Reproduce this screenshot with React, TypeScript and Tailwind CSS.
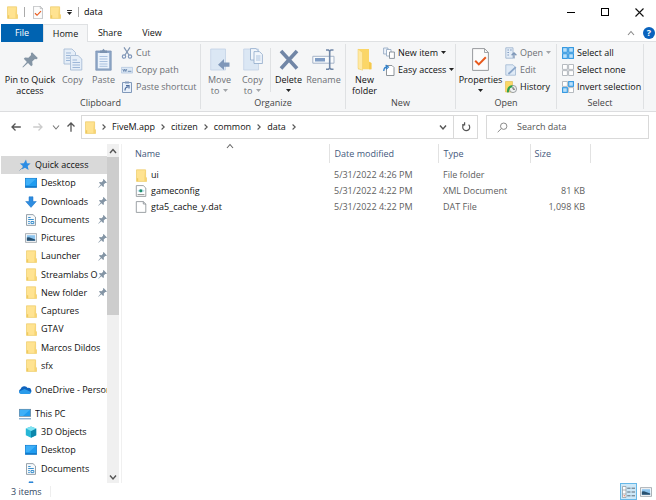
import type { ReactNode } from "react";

type P = { className?: string };

const FolderIcon = ({ className = "h-[13px] w-[11px]" }: P) => (
  <svg viewBox="0 0 11 13" className={className} aria-hidden="true">
    <path d="M.5.8H9.6V8L10.6 9V12.4H.5Z" fill="#ffe391" stroke="#edcb68" strokeWidth=".7" />
    <path d="M.8 9.2H2.2V12.2H.8Z" fill="#f0ca60" />
    <path d="M9 1.2H9.6V8L10.5 9V12.2H8.4V8Z" fill="#f7d474" />
  </svg>
);

const PinIcon = ({ className = "h-[9px] w-[9px]" }: P) => (
  <svg viewBox="0 0 16 16" className={className} aria-hidden="true">
    <path d="M10 .2 15.8 6 14.6 7.2 12.9 6.9 10.2 9.6 10.6 13 9.2 14.2 6 11 1 15.5.4 15 4.9 9.9 1.8 6.8 3 5.4 6.4 5.8 9.1 3.1 8.8 1.4Z" fill="#8495a5" />
  </svg>
);

const CheckDoc = ({ className }: P) => (
  <svg viewBox="0 0 17 23" className={className} aria-hidden="true">
    <path d="M.6.6H12.5L16.4 4.5V22.4H.6Z" fill="#fcfcfc" stroke="#8c9094" strokeWidth=".9" />
    <path d="M12.5.6V4.5H16.4" fill="none" stroke="#8c9094" strokeWidth=".8" />
    <path d="M3.2 12.8 6.8 16.4 13.8 9.2" fill="none" stroke="#e8591c" strokeWidth="2" />
  </svg>
);

const CopyIcon = () => (
  <svg viewBox="0 0 20 23" className="h-[23px] w-5" aria-hidden="true">
    <g fill="#e5eef8" stroke="#a9bdd6" strokeWidth=".9">
      <path d="M1 1H9L12.5 4.5V16H1Z" />
      <path d="M7.5 7.5H15L18.8 11V22H7.5Z" />
    </g>
    <path d="M3 5H8M3 7.5H7M3 10H7M3 12.5H7M9.5 12H14M9.5 14.5H17M9.5 17H17M9.5 19.5H17" stroke="#9db7d8" />
  </svg>
);

const PasteIcon = () => (
  <svg viewBox="0 0 17 23" className="h-[23px] w-[17px]" aria-hidden="true">
    <path d="M.8 3H16.2V22.2H.8Z" fill="#8da6c6" stroke="#7d96b7" strokeWidth=".8" />
    <path d="M2.8 5H14.2V20.4H2.8Z" fill="#eaf2fb" />
    <path d="M5 2.5H7L8.5.8 10 2.5H12V5H5Z" fill="#7c93b0" />
    <path d="M4.5 8.5H12.5M4.5 11H12.5M4.5 13.5H12.5M4.5 16H12.5M4.5 18.3H12.5" stroke="#a9c1df" />
  </svg>
);

const MoveIcon = () => (
  <svg viewBox="0 0 20 23" className="h-[23px] w-5" aria-hidden="true">
    <path d="M.7 1H15.5V22H.7Z" fill="#dbe7f4" stroke="#c1d2e6" strokeWidth=".8" />
    <path d="M19.5 14.5H14V11L8 16.7 14 22V18.8H19.5Z" fill="#7f97b9" />
  </svg>
);

const CopyToIcon = () => (
  <svg viewBox="0 0 20 23" className="h-[23px] w-5" aria-hidden="true">
    <path d="M.7 1H15.5V22H.7Z" fill="#dbe7f4" stroke="#c1d2e6" strokeWidth=".8" />
    <g fill="#f1f6fc" stroke="#8fa9c9" strokeWidth=".8">
      <path d="M7.5.6H13L15.5 3V12H7.5Z" />
      <path d="M11 3.6H16.5L19.4 6.5V15.5H11Z" />
    </g>
    <path d="M13 8H17.5M13 10H17.5M13 12H17.5" stroke="#9db7d8" strokeWidth=".8" />
  </svg>
);

const DeleteIcon = () => (
  <svg viewBox="0 0 20 23" className="h-[23px] w-5" aria-hidden="true">
    <path d="M2 3 18 20.5M18 3 2 20.5" stroke="#7186a6" strokeWidth="3.6" />
  </svg>
);

const RenameIcon = () => (
  <svg viewBox="0 0 23 23" className="h-[23px] w-[23px]" aria-hidden="true">
    <path d="M.8 8.3H22V15.2H.8Z" fill="#f8fafc" stroke="#a5b4c8" />
    <path d="M3 10H13V13.5H3Z" fill="#7f9cc4" />
    <path d="M14 2H16.5L17.7 3.2 19 2H21.5M17.7 3V20M14 21.2H16.5L17.7 20 19 21.2H21.5" fill="none" stroke="#7087a8" strokeWidth="1.6" />
  </svg>
);

const BigFolder = () => (
  <svg viewBox="0 0 15 23" className="h-[23px] w-[15px]" aria-hidden="true">
    <path d="M1 1H12V13.5L14.4 15V21.3H1Z" fill="#fbd667" />
    <path d="M1 1 5.5 4.5V22.3L1 20.5Z" fill="#ffe9a3" stroke="#efcb62" strokeWidth=".5" />
    <path d="M12 1V14L14.4 15V21.3H12Z" fill="#f4c84e" />
  </svg>
);

const S = ({ children }: { children: ReactNode }) => (
  <svg viewBox="0 0 12 12" className="h-3 w-3 shrink-0" fill="none" aria-hidden="true">
    {children}
  </svg>
);

const CutIcon = () => (
  <S>
    <path d="M3 .3 8 8M9 .3 4 8" stroke="#8196b3" strokeWidth="1.2" />
    <circle cx="3" cy="9.6" r="1.7" stroke="#7c94b8" strokeWidth="1.1" />
    <circle cx="9" cy="9.6" r="1.7" stroke="#7c94b8" strokeWidth="1.1" />
  </S>
);
const PathIcon = () => (
  <S>
    <path d="M.4 3.4H11.6V9H.4Z" fill="#dce8f5" stroke="#b3c6de" strokeWidth=".8" />
    <path d="M1.8 5 2.8 7.5 3.8 5 4.8 7.5 5.8 5M6.8 7.3H10.4" stroke="#6884ab" strokeWidth=".9" />
  </S>
);
const ShortcutIcon = () => (
  <S>
    <path d="M1.5 1.5H10.5V11.5H1.5Z" fill="#e8f0fa" stroke="#8199ba" />
    <path d="M4 .5H8V2.5H4Z" fill="#8199ba" />
    <path d="M4 9.5C4 7 5 6 7 6M5 4.6H8V7.6" stroke="#4d6d9d" strokeWidth="1.2" />
  </S>
);
const NewItemIcon = () => (
  <S>
    <path d="M.6 1H5V7H.6Z" fill="#eef4fb" stroke="#8ea4bf" strokeWidth=".8" />
    <path d="M3.5 2.5H8V9H3.5Z" fill="#fff" stroke="#8ea4bf" strokeWidth=".8" />
    <path d="M6.5 5H11.4V11.4H6.5Z" fill="#fff" stroke="#737d88" strokeWidth=".8" />
  </S>
);
const EasyIcon = () => (
  <S>
    <path d="M3.5 1.5H9L11 3.5V11.5H3.5Z" fill="#fff" stroke="#82898f" strokeWidth=".9" />
    <path d="M.8 7C.8 4 2 3 4 3M2.6.9 5.4 3 3 5.3" stroke="#2f7fc9" strokeWidth="1.3" />
  </S>
);
const OpenIcon = () => (
  <S>
    <path d="M.8.8H8V11.2H.8Z" fill="#e4edf7" stroke="#a3b7d0" strokeWidth=".9" />
    <path d="M2.5 3H3.8M2.5 5.5H3.8M2.5 8H3.8M5.2 3H6.6" stroke="#6f8db7" strokeWidth="1.2" />
    <path d="M9 11.5V6M6.6 8.2 9 5.8 11.4 8.2" stroke="#7d96b7" strokeWidth="1.3" />
  </S>
);
const EditIcon = () => (
  <S>
    <path d="M.8.8H8L10.5 3.4V11.2H.8Z" fill="#dfeaf6" stroke="#a9bdd6" strokeWidth=".9" />
    <path d="M3.4 10 10.8 3.2" stroke="#8ba6c9" strokeWidth="1.8" />
  </S>
);
const HistoryIcon = () => (
  <S>
    <path d="M.5.5H7.5V11H.5Z" fill="#fbd867" stroke="#e2ba4b" strokeWidth=".6" />
    <circle cx="8" cy="8" r="3.6" fill="#eef0f0" stroke="#858c8f" strokeWidth=".8" />
    <path d="M8 6V8.2H10" stroke="#444" strokeWidth=".8" />
    <path d="M3 11.4C2.6 7.5 4.4 5.4 7.4 5.2" stroke="#2fa24c" strokeWidth="2" />
  </S>
);

const Squares = ({ on }: { on: boolean[] }) => (
  <S>
    {on.map((v, i) => (
      <rect
        key={i}
        x={i % 2 ? 6.7 : 0.6}
        y={i > 1 ? 6.7 : 0.6}
        width="4.7"
        height="4.7"
        fill={v ? "#b9e0fb" : "#fff"}
        stroke={v ? "#2f96e0" : "#a6acb2"}
        strokeWidth={v ? 1.1 : 0.8}
      />
    ))}
  </S>
);

const Caret = ({ dim = false }: { dim?: boolean }) => (
  <svg viewBox="0 0 5 3" className="h-[3px] w-[5px] shrink-0" aria-hidden="true">
    <path d="M0 0H5L2.5 3Z" fill={dim ? "#a3a6aa" : "#222"} />
  </svg>
);

type Dir = "up" | "down" | "right";
const chevronPaths: Record<Dir, string> = { up: "M1 6 4 2.5 7 6", down: "M1 2.5 4 6 7 2.5", right: "M2.6 1.5 5.2 4 2.6 6.5" };
const Chevron = ({ dir, color = "#555", width = 1.1 }: { dir: Dir; color?: string; width?: number }) => (
  <svg viewBox="0 0 8 8" className="h-2 w-2" fill="none" stroke={color} strokeWidth={width} aria-hidden="true">
    <path d={chevronPaths[dir]} />
  </svg>
);

const arrowPaths = { left: "M9.8 5H1M4.5 1.5 1 5 4.5 8.5", right: "M.2 5H9M5.5 1.5 9 5 5.5 8.5", up: "M5 9.8V1M1.5 4.5 5 1 8.5 4.5" };
const Arrow = ({ kind, color = "#555" }: { kind: "left" | "right" | "up"; color?: string }) => (
  <svg viewBox="0 0 10 10" className="h-[10px] w-[10px]" fill="none" stroke={color} strokeWidth="1.3" aria-hidden="true">
    <path d={arrowPaths[kind]} />
  </svg>
);

const Monitor = ({ stand = false }: { stand?: boolean }) => (
  <svg viewBox="0 0 12 12" className="h-3 w-3 shrink-0" aria-hidden="true">
    <rect x=".3" y="1.3" width="11.4" height={stand ? 7 : 9} fill="#1f9cf0" stroke={stand ? "#6d7f90" : "#0b74c9"} strokeWidth=".7" />
    <path d="M.8 1.8H11L4 8H.8Z" fill="#3fb0f8" />
    {stand ? <path d="M0 10.8H12" stroke="#5f93c4" /> : <path d="M.5 9.8H11.5" stroke="#0b63ae" strokeWidth=".8" />}
  </svg>
);
const DownloadIcon = () => (
  <S>
    <path d="M4 .8H8V5.5H11.3L6 11.4.7 5.5H4Z" fill="#2d8ce0" stroke="#1d73c4" strokeWidth=".5" />
  </S>
);
const DocIcon = () => (
  <S>
    <path d="M1.5.6H8L10.5 3V11.4H1.5Z" fill="#f6f9fb" stroke="#7f8b96" strokeWidth=".8" />
    <path d="M3.2 3.5H5.6M3.2 5.5H8.8M3.2 7.5H4.8M3.2 9.4H4.8M6 7.5H8.8V9.6H6Z" stroke="#3a8fce" />
  </S>
);
const PictureIcon = () => (
  <S>
    <path d="M.4 1.7H11.6V10.3H.4Z" fill="#fff" stroke="#8b949c" strokeWidth=".8" />
    <path d="M1.8 3.2H10.2V8.8H1.8Z" fill="#8cc4ee" />
    <path d="M1.8 5.6 4 5.2 10.2 7.4V8.8H1.8Z" fill="#28506f" />
  </S>
);
const StarIcon = () => (
  <S>
    <path d="M7 .5 8 4.2 11.6 4.6 8.7 7 9.6 11 6 8.8 2.6 10.6 3.8 7 .8 4.6 4.8 4.2Z" fill="#2b8ce4" />
    <path d="M.5 11.5 4 8" stroke="#8ba3b8" />
  </S>
);
const CloudIcon = () => (
  <svg viewBox="0 0 14 12" className="h-3 w-[14px] shrink-0" aria-hidden="true">
    <path d="M3 9.8A2.6 2.6 0 0 1 2.6 4.9 4 4 0 0 1 9.7 3.9 3 3 0 0 1 11 9.8Z" fill="#0f63bd" />
    <path d="M3.2 10A2.5 2.5 0 0 1 1 7.5L6.5 5 13 8A2.4 2.4 0 0 1 11 10Z" fill="#2a9bea" />
  </svg>
);
const CubeIcon = () => (
  <S>
    <path d="M6 .4 11.2 2.6V9.2L6 11.7.8 9.2V2.6Z" fill="#27b6d6" />
    <path d="M6 5 11.2 2.6V9.2L6 11.7Z" fill="#0c87ab" />
    <path d="M6 .4 11.2 2.6 6 5 .8 2.6Z" fill="#7fe3f2" />
  </S>
);
const XmlIcon = () => (
  <S>
    <path d="M1.3.6H8.3L10.8 3V11.4H1.3Z" fill="#fff" stroke="#858b91" strokeWidth=".8" />
    <path d="M2.6 9.6H9.4" stroke="#777" strokeWidth=".8" />
    <path d="M2.3 5.8C4 3.6 8 3.6 9.8 5.8 8 8 4 8 2.3 5.8Z" fill="#bfe0ec" />
    <circle cx="5.8" cy="5.8" r="1.5" fill="#1f8f6c" />
  </S>
);
const BlankIcon = () => (
  <S>
    <path d="M1.3.6H8.3L10.8 3V11.4H1.3Z" fill="#fff" stroke="#858b91" strokeWidth=".8" />
    <path d="M8.3.6V3H10.8" stroke="#858b91" strokeWidth=".8" />
  </S>
);

function Big({ icon, lines, width, dim, caret, caretBelow }: { icon: ReactNode; lines: string[]; width: string; dim?: boolean; caret?: boolean; caretBelow?: boolean }) {
  return (
    <button type="button" className={`flex shrink-0 flex-col items-center pt-1 leading-[11px] ${width} ${dim ? "text-[#6d7075]" : "text-[#111]"}`}>
      <span className="mb-[3px] flex h-[23px] items-center">{icon}</span>
      {lines.map((l, i) => (
        <span key={l} className="flex items-center gap-1 whitespace-nowrap">
          {l}
          {caret && i === lines.length - 1 && <Caret dim={dim} />}
        </span>
      ))}
      {caretBelow && <span className="flex h-[10px] items-center"><Caret /></span>}
    </button>
  );
}

function Small({ icon, label, dim, caret }: { icon: ReactNode; label: string; dim?: boolean; caret?: boolean }) {
  return (
    <button type="button" className={`flex h-[17px] items-center gap-[3px] whitespace-nowrap ${dim ? "text-[#6d7075]" : "text-[#111]"}`}>
      {icon}
      <span>{label}</span>
      {caret && <Caret dim={dim} />}
    </button>
  );
}

function Group({ label, width, children }: { label: string; width: string; children: ReactNode }) {
  return (
    <section aria-label={label} className={`flex shrink-0 flex-col py-[2px] ${width}`}>
      <div className="flex flex-1 flex-col border-r border-[#dfe1e3]">
        <div className="flex flex-1">{children}</div>
        <div className="h-[13px] text-center leading-[13px] text-[#444]">{label}</div>
      </div>
    </section>
  );
}

const Stack = ({ children }: { children: ReactNode }) => <div className="flex flex-col">{children}</div>;

const quick: { label: string; icon: ReactNode; pin?: boolean }[] = [
  { label: "Desktop", icon: <Monitor />, pin: true },
  { label: "Downloads", icon: <DownloadIcon />, pin: true },
  { label: "Documents", icon: <DocIcon />, pin: true },
  { label: "Pictures", icon: <PictureIcon />, pin: true },
  { label: "Launcher", icon: <FolderIcon />, pin: true },
  { label: "Streamlabs O", icon: <FolderIcon />, pin: true },
  { label: "New folder", icon: <FolderIcon />, pin: true },
  { label: "Captures", icon: <FolderIcon /> },
  { label: "GTAV", icon: <FolderIcon /> },
  { label: "Marcos Dildos", icon: <FolderIcon /> },
  { label: "sfx", icon: <FolderIcon /> },
];

function TreeItem({ icon, label, pin, root, active }: { icon: ReactNode; label: string; pin?: boolean; root?: boolean; active?: boolean }) {
  return (
    <li className="flex">
      <a href="#" className={`flex min-w-0 flex-1 items-center text-[#111] ${root ? "pl-[17px]" : "pl-[23px]"} ${active ? "bg-[#d9d9d9]" : ""}`}>
        <span className="flex w-[14px] shrink-0 justify-center">{icon}</span>
        <span className="ml-[3px] min-w-0 flex-1 overflow-hidden whitespace-nowrap">{label}</span>
        {pin && <span className="mr-[3px] shrink-0"><PinIcon /></span>}
      </a>
    </li>
  );
}

const files = [
  { name: "ui", icon: <FolderIcon />, date: "5/31/2022 4:26 PM", type: "File folder", size: "" },
  { name: "gameconfig", icon: <XmlIcon />, date: "5/31/2022 4:22 PM", type: "XML Document", size: "81 KB" },
  { name: "gta5_cache_y.dat", icon: <BlankIcon />, date: "5/31/2022 4:22 PM", type: "DAT File", size: "1,098 KB" },
];

export default function App() {
  return (
    <div className="flex h-screen w-full flex-col overflow-hidden bg-white font-['Open_Sans','Noto_Sans',sans-serif] text-[9px] leading-3 text-[#111]">
      <header className="flex h-6 shrink-0 items-center pl-[7px]">
        <FolderIcon />
        <span className="ml-[6px] h-[10px] w-px bg-[#aaa]" />
        <button type="button" aria-label="Properties" className="ml-2"><CheckDoc className="h-[13px] w-[10px]" /></button>
        <button type="button" aria-label="New folder" className="ml-[7px]"><FolderIcon /></button>
        <button type="button" aria-label="Customize toolbar" className="ml-[5px] flex w-[7px] flex-col items-center gap-px">
          <span className="h-px w-[5px] bg-[#333]" />
          <Caret />
        </button>
        <span className="ml-[5px] h-[10px] w-px bg-[#aaa]" />
        <h1 className="ml-[5px] text-black">data</h1>
        <div className="ml-auto flex self-stretch">
          <button type="button" aria-label="Minimize" className="flex w-[34px] items-center justify-center"><span className="h-px w-2 bg-black" /></button>
          <button type="button" aria-label="Maximize" className="flex w-[34px] items-center justify-center"><span className="h-2 w-2 border border-black" /></button>
          <button type="button" aria-label="Close" className="flex w-[34px] items-center justify-center">
            <svg viewBox="0 0 9 9" className="h-[9px] w-[9px]" stroke="#111" strokeWidth="1.1" aria-hidden="true"><path d="M.5.5 8.5 8.5M8.5.5.5 8.5" /></svg>
          </button>
        </div>
      </header>

      <div role="tablist" className="flex h-[18px] shrink-0 pl-px">
        <button type="button" role="tab" className="w-[42px] bg-[#0063b1] text-white">File</button>
        <div className="flex flex-1 border-b border-[#dfe1e3]">
          <button type="button" role="tab" aria-selected="true" className="-mb-px w-[45px] border border-b-0 border-[#dfe1e3] bg-[#f5f6f7]">Home</button>
          <button type="button" role="tab" className="w-11">Share</button>
          <button type="button" role="tab" className="w-10">View</button>
          <div className="ml-auto flex items-center gap-2 pr-px">
            <button type="button" aria-label="Collapse ribbon"><Chevron dir="up" color="#888" /></button>
            <button type="button" aria-label="Help" className="flex h-[12px] w-[12px] items-center justify-center rounded-full bg-[#0a63bd] font-bold leading-none text-white">?</button>
          </div>
        </div>
      </div>

      <div className="flex h-[70px] shrink-0 border-b border-[#dcdddf] bg-[#f5f6f7] pl-px">
        <Group label="Clipboard" width="w-[200px]">
          <Big icon={<PinIcon className="h-4 w-4" />} lines={["Pin to Quick", "access"]} width="w-[58px]" />
          <Big icon={<CopyIcon />} lines={["Copy"]} width="w-[27px]" dim />
          <Big icon={<PasteIcon />} lines={["Paste"]} width="w-[35px]" dim />
          <Stack>
            <Small icon={<CutIcon />} label="Cut" dim />
            <Small icon={<PathIcon />} label="Copy path" dim />
            <Small icon={<ShortcutIcon />} label="Paste shortcut" dim />
          </Stack>
        </Group>
        <Group label="Organize" width="w-[145px]">
          <Big icon={<MoveIcon />} lines={["Move", "to"]} width="w-[37px]" dim caret />
          <Big icon={<CopyToIcon />} lines={["Copy", "to"]} width="w-[29px]" dim caret />
          <span className="ml-[3px] mt-1 h-11 w-px bg-[#dfe1e3]" />
          <Big icon={<DeleteIcon />} lines={["Delete"]} width="w-[35px]" caretBelow />
          <Big icon={<RenameIcon />} lines={["Rename"]} width="w-[35px]" dim />
        </Group>
        <Group label="New" width="w-[110px]">
          <Big icon={<BigFolder />} lines={["New", "folder"]} width="w-[37px]" />
          <Stack>
            <Small icon={<NewItemIcon />} label="New item" caret />
            <Small icon={<EasyIcon />} label="Easy access" caret />
          </Stack>
        </Group>
        <Group label="Open" width="w-[101px]">
          <Big icon={<CheckDoc className="h-[23px] w-[17px]" />} lines={["Properties"]} width="w-[49px]" caretBelow />
          <Stack>
            <Small icon={<OpenIcon />} label="Open" dim caret />
            <Small icon={<EditIcon />} label="Edit" dim />
            <Small icon={<HistoryIcon />} label="History" />
          </Stack>
        </Group>
        <Group label="Select" width="w-[87px]">
          <div className="pl-[5px]">
            <Stack>
              <Small icon={<Squares on={[true, true, true, true]} />} label="Select all" />
              <Small icon={<Squares on={[false, false, false, false]} />} label="Select none" />
              <Small icon={<Squares on={[false, true, true, false]} />} label="Invert selection" />
            </Stack>
          </div>
        </Group>
      </div>

      <div className="flex h-[30px] shrink-0 items-center pl-[11px] pr-[7px]">
        <button type="button" aria-label="Back"><Arrow kind="left" /></button>
        <button type="button" aria-label="Forward" className="ml-3"><Arrow kind="right" color="#ccc" /></button>
        <button type="button" aria-label="Recent locations" className="ml-[9px]"><Chevron dir="down" color="#777" /></button>
        <button type="button" aria-label="Up" className="ml-[6px]"><Arrow kind="up" /></button>
        <nav aria-label="Address" className="ml-[5px] flex h-6 flex-1 items-center border border-[#d9d9d9] pl-[3px] text-[#111]">
          <FolderIcon />
          {["FiveM.app", "citizen", "common", "data"].map((c) => (
            <span key={c} className="flex items-center">
              <span className="flex w-4 justify-center"><Chevron dir="right" /></span>
              <button type="button">{c}</button>
            </span>
          ))}
          <span className="flex w-4 justify-center"><Chevron dir="right" /></span>
          <button type="button" aria-label="Previous locations" className="ml-auto flex w-[21px] justify-center"><Chevron dir="down" width={1.4} /></button>
          <button type="button" aria-label="Refresh" className="flex w-6 items-center justify-center self-stretch border-l border-[#d9d9d9]">
            <svg viewBox="0 0 10 10" className="h-[10px] w-[10px]" fill="none" stroke="#555" strokeWidth="1.2" aria-hidden="true">
              <path d="M7.6 2.6A3.5 3.5 0 1 1 3.2 2.3M3.6.2V2.9H1" />
            </svg>
          </button>
        </nav>
        <label className="ml-2 flex h-6 w-[163px] items-center border border-[#d9d9d9] pl-[10px]">
          <svg viewBox="0 0 11 11" className="h-[11px] w-[11px] shrink-0" fill="none" stroke="#8a8a8a" aria-hidden="true">
            <circle cx="6.7" cy="4.2" r="3.2" />
            <path d="M4.4 6.5.7 10.2" />
          </svg>
          <input type="search" aria-label="Search data" placeholder="Search data" className="ml-[9px] min-w-0 flex-1 bg-transparent outline-none placeholder:text-[#555]" />
        </label>
      </div>

      <div className="flex min-h-0 flex-1 pt-[2px]">
        <aside className="flex w-[122px] shrink-0 border-r border-[#f0f0f0] pr-[2px]">
          <nav aria-label="Folders" className="min-w-0 flex-1 overflow-hidden pl-px pt-3">
            <ul className="grid h-[219px] auto-rows-fr">
              <TreeItem icon={<StarIcon />} label="Quick access" root active />
              {quick.map((q) => <TreeItem key={q.label} {...q} />)}
            </ul>
            <ul className="mt-[6px] grid h-[18px] auto-rows-fr">
              <TreeItem icon={<CloudIcon />} label="OneDrive - Personal" root />
            </ul>
            <ul className="mt-[6px] grid h-[91px] auto-rows-fr">
              <TreeItem icon={<Monitor stand />} label="This PC" root />
              <TreeItem icon={<CubeIcon />} label="3D Objects" />
              <TreeItem icon={<Monitor />} label="Desktop" />
              <TreeItem icon={<DocIcon />} label="Documents" />
              <TreeItem icon={<DownloadIcon />} label="Downloads" />
            </ul>
          </nav>
          <div className="flex w-3 shrink-0 flex-col items-center bg-[#f0f0f0]">
            <button type="button" aria-label="Scroll up" className="flex h-[13px] items-center"><Chevron dir="up" width={1.4} /></button>
            <span className="h-[158px] w-full bg-[#cdcdcd]" />
            <button type="button" aria-label="Scroll down" className="mt-auto flex h-[13px] items-center"><Chevron dir="down" width={1.4} /></button>
          </div>
        </aside>

        <main className="relative min-w-0 flex-1">
          <span className="absolute left-[104px] top-[-2px]"><Chevron dir="up" color="#666" /></span>
          <table className="w-full table-fixed border-collapse text-left">
            <colgroup>
              <col className="w-[207px]" />
              <col className="w-[109px]" />
              <col className="w-[92px]" />
              <col className="w-[60px]" />
              <col />
            </colgroup>
            <thead>
              <tr className="h-[19px] text-[#44597c]">
                <th scope="col" className="border-r border-[#e2e2e2] pl-[13px] font-normal">Name</th>
                <th scope="col" className="border-r border-[#e2e2e2] pl-[5px] font-normal">Date modified</th>
                <th scope="col" className="border-r border-[#e2e2e2] pl-[5px] font-normal">Type</th>
                <th scope="col" className="border-r border-[#e2e2e2] pl-1 font-normal">Size</th>
                <td />
              </tr>
            </thead>
            <tbody className="before:block before:h-[4px] before:content-['']">
              {files.map((f) => (
                <tr key={f.name} className="h-4 text-[#606060]">
                  <td className="pl-[13px] text-[#111]">
                    <span className="flex items-center gap-1"><span className="flex w-3 justify-center">{f.icon}</span>{f.name}</span>
                  </td>
                  <td className="pl-[5px]">{f.date}</td>
                  <td className="pl-[5px]">{f.type}</td>
                  <td className="pr-[5px] text-right">{f.size}</td>
                  <td />
                </tr>
              ))}
            </tbody>
          </table>
        </main>
      </div>

      <footer className="flex h-[17px] shrink-0 items-center pl-[11px] pr-1 text-[#33475f]">
        <span>3 items</span>
        <span className="ml-2 h-[11px] w-px bg-[#eee]" />
        <div className="ml-auto flex items-center gap-[3px]">
          <button type="button" aria-label="Details view" className="flex h-[17px] w-[17px] items-center justify-center border border-[#66b8e8] bg-[#cde8f8]">
            <svg viewBox="0 0 13 12" className="h-3 w-[13px]" fill="none" aria-hidden="true">
              <path d="M.5.5H4V11.5H.5ZM.5 4H4M.5 8H4" fill="#fff" stroke="#8a929a" strokeWidth=".7" />
              <path d="M5.2 2.2H8.5M9.6 2.2H13M5.2 6H8.5M9.6 6H13M5.2 9.8H8.5M9.6 9.8H13" stroke="#5d6c78" />
              <path d="M1.6 9.8H3" stroke="#e0694a" />
            </svg>
          </button>
          <button type="button" aria-label="Large icons view"><PictureIcon /></button>
        </div>
      </footer>
    </div>
  );
}
